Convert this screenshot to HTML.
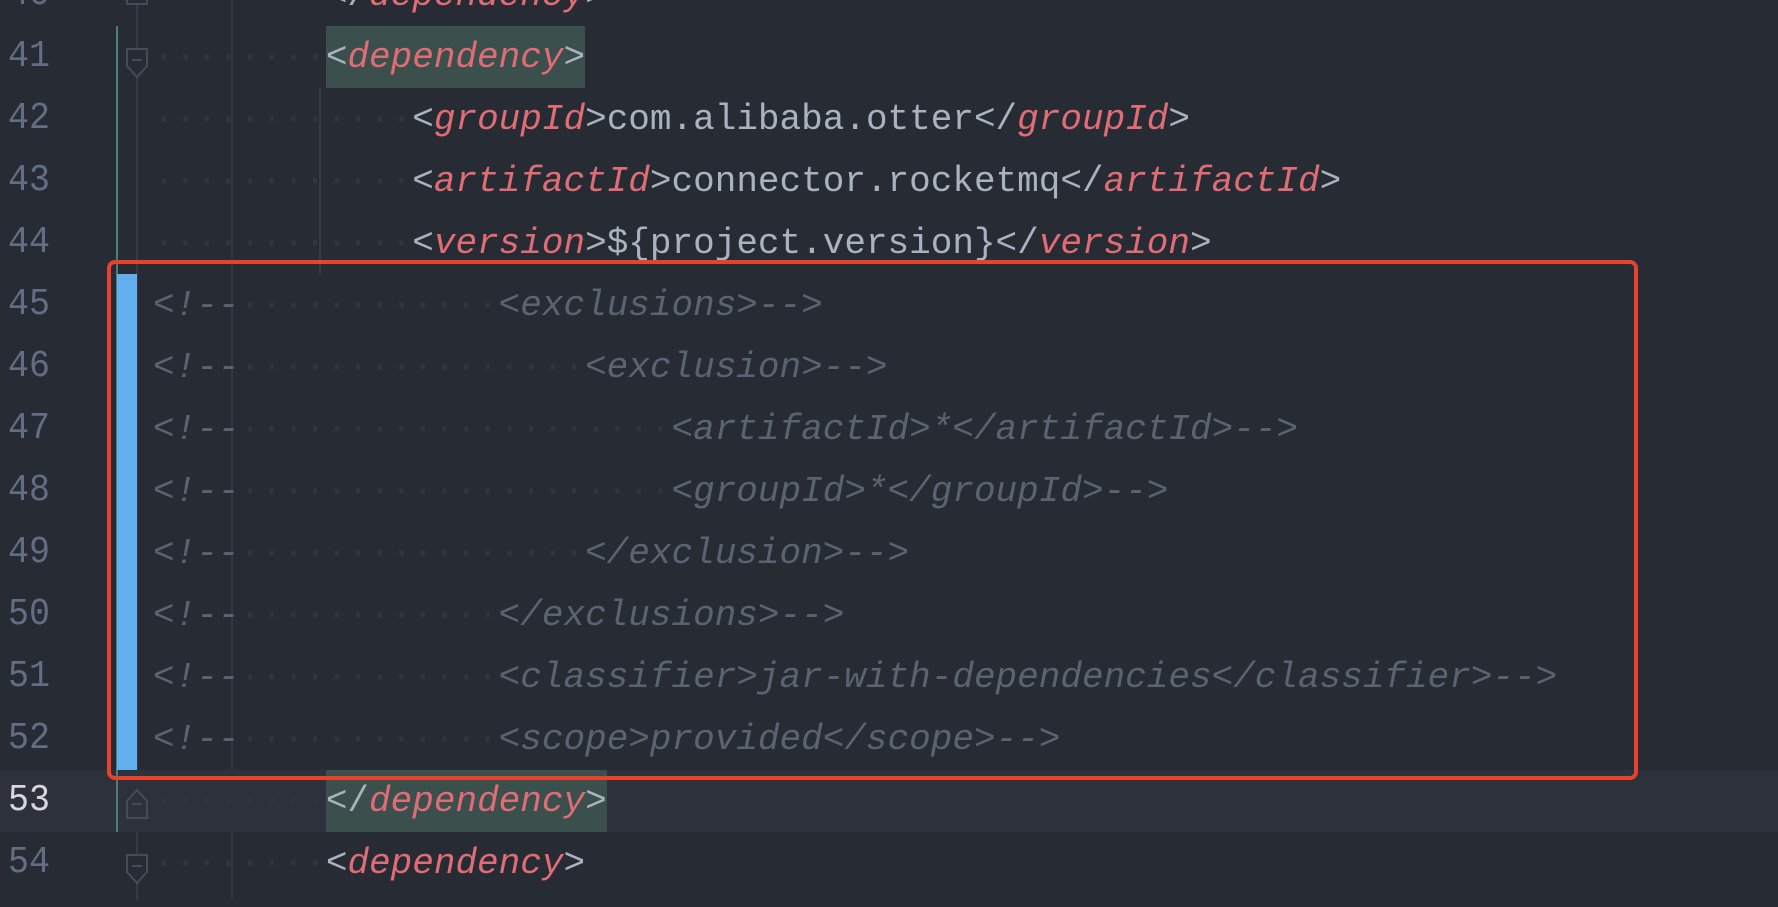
<!DOCTYPE html>
<html><head><meta charset="utf-8"><style>
html,body{margin:0;padding:0;width:1778px;height:900px;overflow:hidden;background:#272b34;}
.row{position:absolute;left:0;width:1778px;height:62px;}
.cur{background:#2c313b;}
.ln{position:absolute;left:8px;top:11px;height:62px;line-height:62px;font:35px "Liberation Mono",monospace;color:#636d83;transform:scaleY(1.08);}
.cur .ln{color:#d4d7dd;}
pre{position:absolute;left:153px;top:11px;margin:0;height:62px;line-height:62px;font:36px "Liberation Mono",monospace;color:#abb2bf;white-space:pre;}
.t{color:#e06c75;font-style:italic;}
.c{color:#5c6370;font-style:italic;}
.d{color:#30353f;font-style:normal;}
.hl{position:absolute;top:0;height:62px;background:#3b4f4c;}
</style></head><body>

<div style="position:absolute;left:231px;top:0;width:2px;height:900px;background:#323742"></div>
<div style="position:absolute;left:319px;top:88px;width:2px;height:186px;background:#363b45"></div>
<div style="position:absolute;left:136px;top:0;width:2px;height:900px;background:#363b45"></div>
<div style="position:absolute;left:116px;top:26px;width:2px;height:806px;background:#4e7e7b"></div>

<div class="row" style="top:-36px"><span class="ln">40</span><pre><span class="d">········</span>&lt;/<span class="t">dependency</span>&gt;</pre></div>
<div class="row" style="top:26px"><div class="hl" style="left:326px;width:259px"></div><span class="ln">41</span><pre><span class="d">········</span>&lt;<span class="t">dependency</span>&gt;</pre></div>
<div class="row" style="top:88px"><span class="ln">42</span><pre><span class="d">············</span>&lt;<span class="t">groupId</span>&gt;com.alibaba.otter&lt;/<span class="t">groupId</span>&gt;</pre></div>
<div class="row" style="top:150px"><span class="ln">43</span><pre><span class="d">············</span>&lt;<span class="t">artifactId</span>&gt;connector.rocketmq&lt;/<span class="t">artifactId</span>&gt;</pre></div>
<div class="row" style="top:212px"><span class="ln">44</span><pre><span class="d">············</span>&lt;<span class="t">version</span>&gt;${project.version}&lt;/<span class="t">version</span>&gt;</pre></div>
<div class="row" style="top:274px"><span class="ln">45</span><pre class="c">&lt;!--<span class="d">············</span>&lt;exclusions&gt;--&gt;</pre></div>
<div class="row" style="top:336px"><span class="ln">46</span><pre class="c">&lt;!--<span class="d">················</span>&lt;exclusion&gt;--&gt;</pre></div>
<div class="row" style="top:398px"><span class="ln">47</span><pre class="c">&lt;!--<span class="d">····················</span>&lt;artifactId&gt;*&lt;/artifactId&gt;--&gt;</pre></div>
<div class="row" style="top:460px"><span class="ln">48</span><pre class="c">&lt;!--<span class="d">····················</span>&lt;groupId&gt;*&lt;/groupId&gt;--&gt;</pre></div>
<div class="row" style="top:522px"><span class="ln">49</span><pre class="c">&lt;!--<span class="d">················</span>&lt;/exclusion&gt;--&gt;</pre></div>
<div class="row" style="top:584px"><span class="ln">50</span><pre class="c">&lt;!--<span class="d">············</span>&lt;/exclusions&gt;--&gt;</pre></div>
<div class="row" style="top:646px"><span class="ln">51</span><pre class="c">&lt;!--<span class="d">············</span>&lt;classifier&gt;jar-with-dependencies&lt;/classifier&gt;--&gt;</pre></div>
<div class="row" style="top:708px"><span class="ln">52</span><pre class="c">&lt;!--<span class="d">············</span>&lt;scope&gt;provided&lt;/scope&gt;--&gt;</pre></div>
<div class="row cur" style="top:770px"><div class="hl" style="left:326px;width:281px"></div><span class="ln">53</span><pre><span class="d">········</span>&lt;/<span class="t">dependency</span>&gt;</pre></div>
<div class="row" style="top:832px"><span class="ln">54</span><pre><span class="d">········</span>&lt;<span class="t">dependency</span>&gt;</pre></div>

<div style="position:absolute;left:116px;top:770px;width:2px;height:62px;background:#4e7e7b"></div>

<svg style="position:absolute;left:0;top:0" width="300" height="900">
<g fill="#272b34" stroke="#454b57" stroke-width="2">
<path d="M127,-10 h20 v14 h-20 z"/>
<path d="M127,49 h20 v17 l-10,11 l-10,-11 z"/><path d="M132,60 h10"/>
<path d="M127,818 h20 v-17 l-10,-11 l-10,11 z" fill="#2c313b"/><path d="M132,804 h10"/>
<path d="M127,855 h20 v17 l-10,11 l-10,-11 z"/><path d="M132,866 h10"/>
</g>
</svg>

<div style="position:absolute;left:117px;top:274px;width:20px;height:496px;background:#61afef"></div>

<div style="position:absolute;left:107px;top:260px;width:1523px;height:512px;border:4px solid #e8412c;border-radius:8px"></div>
</body></html>
